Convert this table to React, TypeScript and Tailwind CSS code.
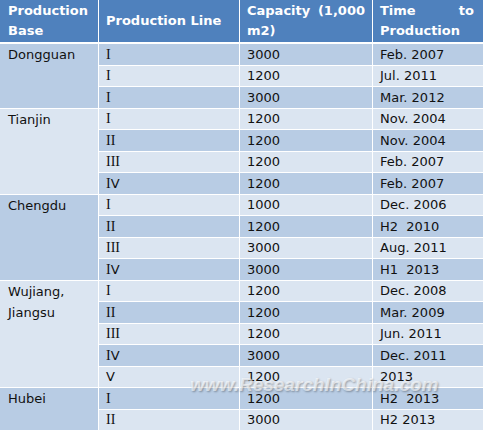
import React from "react";

type Row = { line: string; cap: string; time: string };
type Group = { base: string; rows: Row[] };

const groups: Group[] = [
  {
    base: "Dongguan",
    rows: [
      { line: "I", cap: "3000", time: "Feb. 2007" },
      { line: "I", cap: "1200", time: "Jul. 2011" },
      { line: "I", cap: "3000", time: "Mar. 2012" },
    ],
  },
  {
    base: "Tianjin",
    rows: [
      { line: "I", cap: "1200", time: "Nov. 2004" },
      { line: "II", cap: "1200", time: "Nov. 2004" },
      { line: "III", cap: "1200", time: "Feb. 2007" },
      { line: "IV", cap: "1200", time: "Feb. 2007" },
    ],
  },
  {
    base: "Chengdu",
    rows: [
      { line: "I", cap: "1000", time: "Dec. 2006" },
      { line: "II", cap: "1200", time: "H2  2010" },
      { line: "III", cap: "3000", time: "Aug. 2011" },
      { line: "IV", cap: "3000", time: "H1  2013" },
    ],
  },
  {
    base: "Wujiang, Jiangsu",
    rows: [
      { line: "I", cap: "1200", time: "Dec. 2008" },
      { line: "II", cap: "1200", time: "Mar. 2009" },
      { line: "III", cap: "1200", time: "Jun. 2011" },
      { line: "IV", cap: "3000", time: "Dec. 2011" },
      { line: "V", cap: "1200", time: "2013" },
    ],
  },
  {
    base: "Hubei",
    rows: [
      { line: "I", cap: "1200", time: "H2  2013" },
      { line: "II", cap: "3000", time: "H2 2013" },
    ],
  },
];

function Roman({ text }: { text: string }) {
  return (
    <>
      {text.split("").map((ch, i) =>
        ch === "I" ? (
          <span key={i} className="font-['Liberation_Serif',serif] text-[14px]">
            I
          </span>
        ) : (
          <span key={i}>{ch}</span>
        )
      )}
    </>
  );
}

export default function App() {
  let idx = 0;
  const body: React.ReactNode[] = [];
  groups.forEach((g, gi) => {
    g.rows.forEach((r, ri) => {
      const dark = idx % 2 === 0;
      const h = idx % 2 === 0 ? "h-[22px]" : "h-[21px]";
      const bg = dark ? "bg-[#b8cce4]" : "bg-[#dbe5f1]";
      body.push(
        <tr key={`${gi}-${ri}`}>
          {ri === 0 && (
            <td
              rowSpan={g.rows.length}
              className={`${gi % 2 === 0 ? "bg-[#b8cce4]" : "bg-[#dbe5f1]"} border-r border-b border-white pl-2 pr-1 pt-0 align-top leading-[21px]`}
            >
              {g.base}
            </td>
          )}
          <td className={`${bg} ${h} border-r border-b border-white px-[7px] py-0 align-middle leading-[20px]`}>
            <Roman text={r.line} />
          </td>
          <td className={`${bg} ${h} border-r border-b border-white px-[7px] py-0 align-middle leading-[20px]`}>
            {r.cap}
          </td>
          <td className={`${bg} ${h} border-b border-white px-[7px] py-0 align-middle leading-[20px] whitespace-pre`}>
            {r.time}
          </td>
        </tr>
      );
      idx++;
    });
  });

  return (
    <div className="relative w-[483px] h-[431px] overflow-hidden bg-white font-['DejaVu_Sans',sans-serif] text-[13px] text-[#111]">
      <table className="w-[483px] table-fixed border-separate border-spacing-0">
        <colgroup>
          <col className="w-[99px]" />
          <col className="w-[141px]" />
          <col className="w-[133px]" />
          <col className="w-[110px]" />
        </colgroup>
        <thead>
          <tr>
            <th className="h-[44px] bg-[#4f81bd] border-r border-b-2 border-white pl-2 pr-1 py-0 text-left align-middle font-bold text-white leading-[20px]">
              Production Base
            </th>
            <th className="h-[44px] bg-[#4f81bd] border-r border-b-2 border-white px-[7px] py-0 text-left align-middle font-bold text-white leading-[20px]">
              Production Line
            </th>
            <th className="h-[44px] bg-[#4f81bd] border-r border-b-2 border-white px-[7px] py-0 text-justify align-middle font-bold text-white leading-[20px]">
              Capacity (1,000 m2)
            </th>
            <th className="h-[44px] bg-[#4f81bd] border-b-2 border-white pl-[7px] pr-[9px] py-0 text-justify align-middle font-bold text-white leading-[20px]">
              Time to Production
            </th>
          </tr>
        </thead>
        <tbody>{body}</tbody>
      </table>
      <div className="pointer-events-none absolute left-[190px] top-[374px] font-['Liberation_Sans',sans-serif] text-[19px] leading-[22px] font-bold italic text-white/60 [text-shadow:1px_1px_2px_rgba(0,0,0,0.3)] whitespace-nowrap">
        www.ResearchInChina.com
      </div>
    </div>
  );
}
